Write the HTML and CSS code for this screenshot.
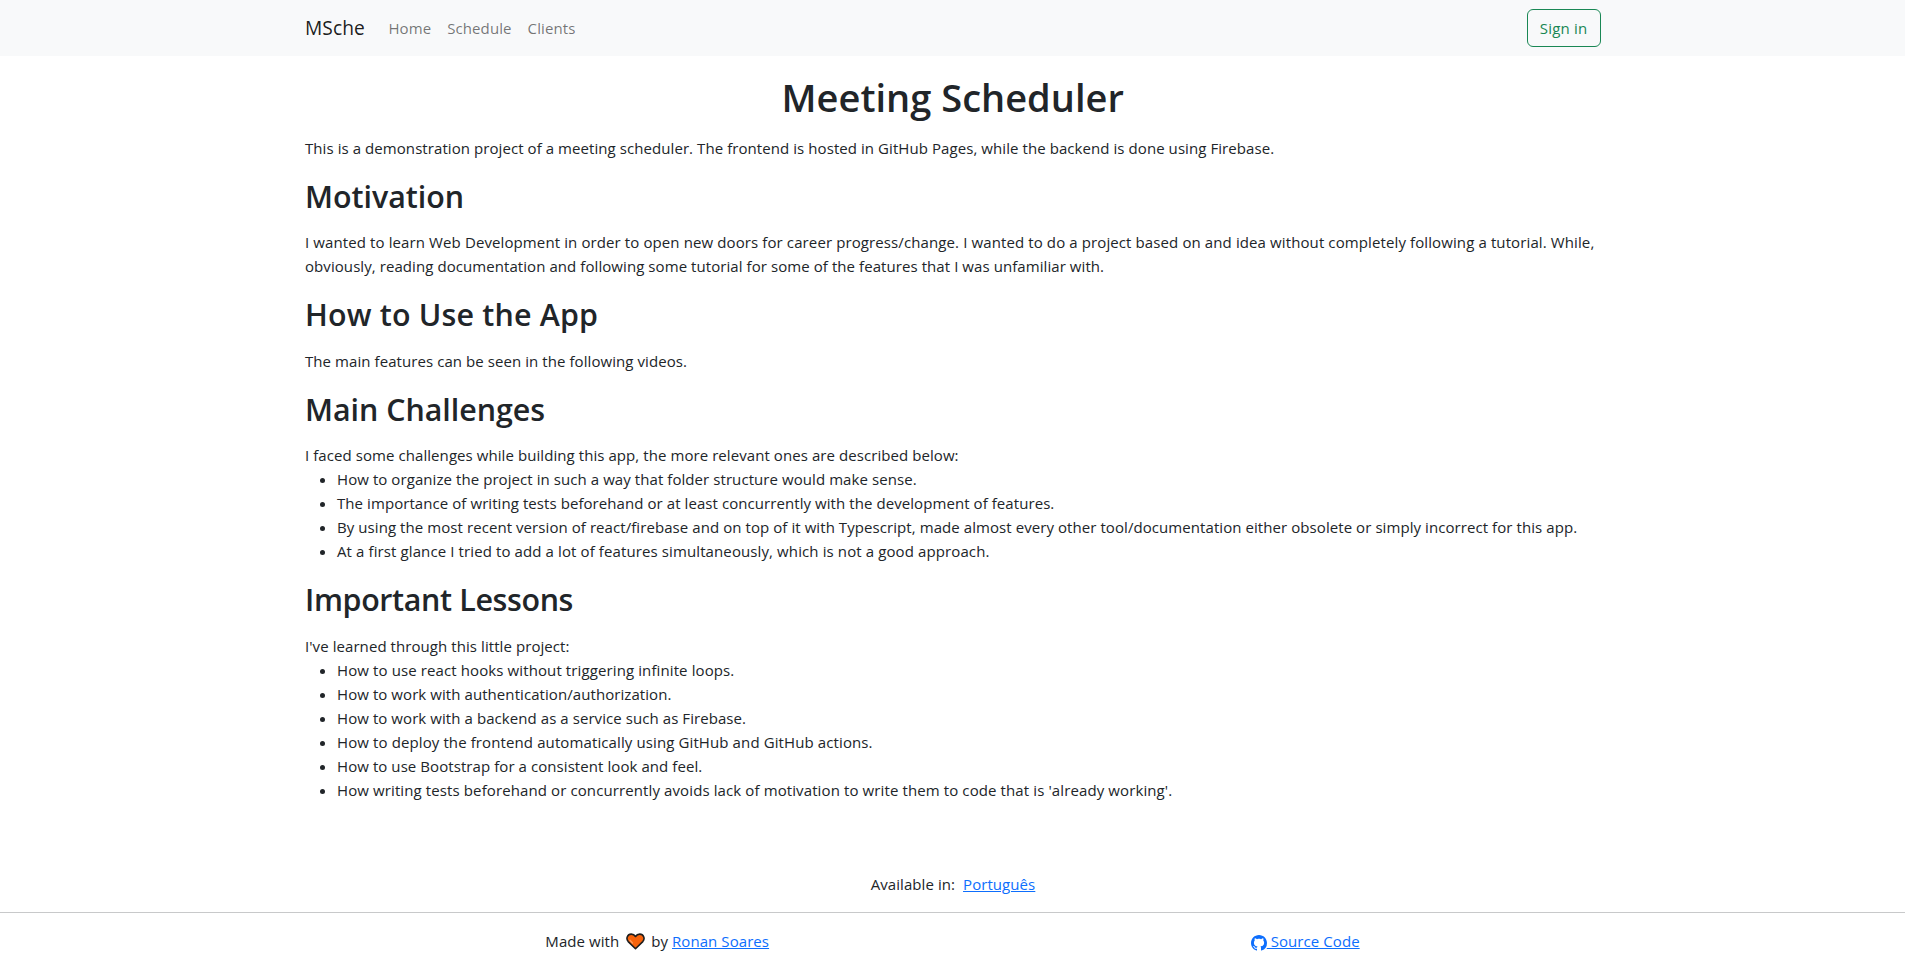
FILE: index.html
```html
<!DOCTYPE html>
<html lang="en">
<head>
<meta charset="utf-8">
<title>Meeting Scheduler</title>
<link rel="stylesheet" href="styles.css">
</head>
<body>
<nav class="navbar">
  <div class="container navbar-inner">
    <a class="brand" href="#">MSche</a>
    <div class="nav-links">
      <a class="nav-link" href="#">Home</a>
      <a class="nav-link" href="#">Schedule</a>
      <a class="nav-link" href="#">Clients</a>
    </div>
    <button class="sign-in" type="button">Sign in</button>
  </div>
</nav>
<main class="container content">
  <h1 class="title">Meeting Scheduler</h1>
  <p>This is a demonstration project of a meeting scheduler. The frontend is hosted in GitHub Pages, while the backend is done using Firebase.</p>
  <h2>Motivation</h2>
  <p><span class="loose">I wanted to learn Web Development in order to open new doors for career progress/change. I wanted to do a project based on and idea without completely following a tutorial. While,</span><br>obviously, reading documentation and following some tutorial for some of the features that I was unfamiliar with.</p>
  <h2 class="wide">How to Use the App</h2>
  <p>The main features can be seen in the following videos.</p>
  <h2>Main Challenges</h2>
  <div>
    <p>I faced some challenges while building this app, the more relevant ones are described below:</p>
    <ul class="list">
      <li>How to organize the project in such a way that folder structure would make sense.</li>
      <li>The importance of writing tests beforehand or at least concurrently with the development of features.</li>
      <li>By using the most recent version of react/firebase and on top of it with Typescript, made almost every other tool/documentation either obsolete or simply incorrect for this app.</li>
      <li class="loose">At a first glance I tried to add a lot of features simultaneously, which is not a good approach.</li>
    </ul>
  </div>
  <h2 class="tight">Important Lessons</h2>
  <div>
    <p>I've learned through this little project:</p>
    <ul class="list">
      <li class="loose">How to use react hooks without triggering infinite loops.</li>
      <li>How to work with authentication/authorization.</li>
      <li>How to work with a backend as a service such as Firebase.</li>
      <li class="loose">How to deploy the frontend automatically using GitHub and GitHub actions.</li>
      <li>How to use Bootstrap for a consistent look and feel.</li>
      <li class="loose">How writing tests beforehand or concurrently avoids lack of motivation to write them to code that is 'already working'.</li>
    </ul>
  </div>
</main>
<div class="languages"><span>Available in:</span><a class="link" href="#">Português</a></div>
<footer class="footer">
  <div class="container footer-inner">
    <div class="credit">
      <span>Made with</span>
      <svg class="heart" viewBox="0 0 19 17"><path d="M9.5 15.7 2.2 8.6C-.4 5.6 1.5 1.1 5.2 1.1c1.9 0 3.4 1 4.3 2.4.9-1.4 2.4-2.4 4.3-2.4 3.7 0 5.6 4.5 3 7.5z" fill="#f7630c" stroke="#1d1d1d" stroke-width="1.6" stroke-linejoin="round"/><path d="M4 7.2 6.5 10" stroke="#ff9b5c" stroke-width="1.3" stroke-linecap="round"/></svg>
      <span>by</span>
      <a class="link" href="#">Ronan Soares</a>
    </div>
    <a class="link source" href="#"><svg class="github" viewBox="0 0 16 16"><path fill="currentColor" d="M8 0C3.58 0 0 3.58 0 8c0 3.54 2.29 6.53 5.47 7.59.4.07.55-.17.55-.38 0-.19-.01-.82-.01-1.49-2.01.37-2.53-.49-2.69-.94-.09-.23-.48-.94-.82-1.13-.28-.15-.68-.52-.01-.53.63-.01 1.08.58 1.23.82.72 1.21 1.87.87 2.33.66.07-.52.28-.87.51-1.07-1.78-.2-3.64-.89-3.64-3.95 0-.87.31-1.59.82-2.15-.08-.2-.36-1.02.08-2.12 0 0 .67-.21 2.2.82.64-.18 1.32-.27 2-.27s1.36.09 2 .27c1.53-1.04 2.2-.82 2.2-.82.44 1.1.16 1.92.08 2.12.51.56.82 1.27.82 2.15 0 3.07-1.87 3.75-3.65 3.95.29.25.54.73.54 1.48 0 1.07-.01 1.93-.01 2.2 0 .21.15.46.55.38A8.01 8.01 0 0 0 16 8c0-4.42-3.58-8-8-8z"/></svg> Source Code</a>
  </div>
</footer>
</body>
</html>
```
FILE: styles.css
```css
* { box-sizing: border-box; }
body {
  margin: 0;
  background: #fff;
  color: #212529;
  font: 15px/24px "Segoe UI", "Open Sans", "Noto Sans", sans-serif;
  letter-spacing: .072px;
}
h1, h2, p, ul { margin: 0; }
a { color: inherit; text-decoration: none; }
.container { width: 1320px; margin: 0 auto; padding: 0 12px; }
.navbar { height: 56px; background: #f8f9fa; }
.navbar-inner { display: flex; align-items: center; height: 56px; padding-left: 12.5px; }
.brand { margin-right: 15.5px; font-size: 19.2px; line-height: 30px; color: rgba(0,0,0,.9); }
.nav-links { display: flex; flex: 1; }
.nav-link { padding: 8px; color: rgba(0,0,0,.55); letter-spacing: .1px; }
.sign-in {
  height: 38px;
  padding: 0 12px;
  border: 1px solid #198754;
  border-radius: 6px;
  background: transparent;
  color: #198754;
  font: inherit;
  letter-spacing: .2px;
}
.content { display: flex; flex-direction: column; gap: 16px; padding-top: 16px; padding-left: 12.5px; }
.title, h2 { font-weight: 600; }
.title { padding-top: 3px; font-size: 38px; line-height: 45px; text-align: center; letter-spacing: .02px; }
h2 { padding-top: 2.8px; font-size: 30.4px; line-height: 35.6px; letter-spacing: -.03px; }
.wide { letter-spacing: .18px; }
.tight { letter-spacing: -.35px; }
.loose { letter-spacing: .11px; }
.list { padding-left: 32px; }
.languages { display: flex; justify-content: center; gap: 8px; margin-top: 70.4px; padding-left: 1px; }
.link { color: #0d6efd; text-decoration: underline; }
.footer { margin-top: 16px; padding-top: 16px; border-top: 1px solid #c8c9ca; }
.footer-inner { display: flex; justify-content: space-around; }
.heart { width: 19px; height: 17px; margin: 0 2px 0 3px; vertical-align: -3px; fill: none; }
.github { width: 16px; height: 16px; vertical-align: -4px; }
```
